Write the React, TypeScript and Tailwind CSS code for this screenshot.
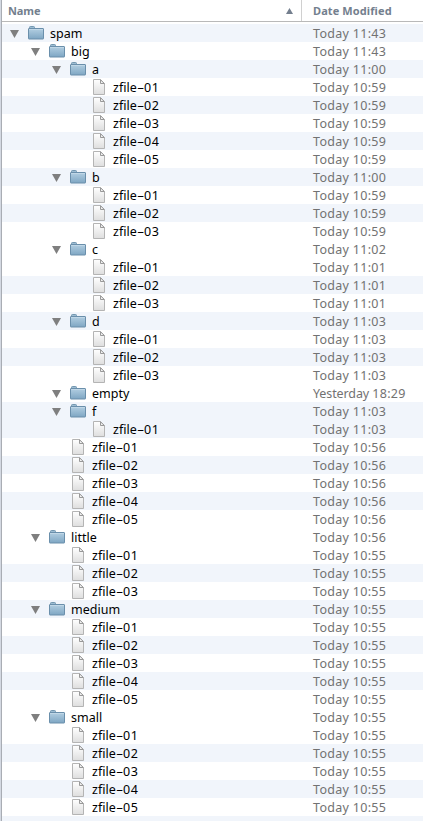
type Row = { depth: number; name: string; date: string; folder?: boolean };

const folder = (depth: number, name: string, date: string): Row => ({ depth, name, date, folder: true });
const files = (depth: number, count: number, date: string): Row[] =>
  Array.from({ length: count }, (_, i) => ({ depth, name: `zfile-0${i + 1}`, date }));

const rows: Row[] = [
  folder(0, 'spam', 'Today 11:43'),
  folder(1, 'big', 'Today 11:43'),
  folder(2, 'a', 'Today 11:00'),
  ...files(3, 5, 'Today 10:59'),
  folder(2, 'b', 'Today 11:00'),
  ...files(3, 3, 'Today 10:59'),
  folder(2, 'c', 'Today 11:02'),
  ...files(3, 3, 'Today 11:01'),
  folder(2, 'd', 'Today 11:03'),
  ...files(3, 3, 'Today 11:03'),
  folder(2, 'empty', 'Yesterday 18:29'),
  folder(2, 'f', 'Today 11:03'),
  ...files(3, 1, 'Today 11:03'),
  ...files(2, 5, 'Today 10:56'),
  folder(1, 'little', 'Today 10:56'),
  ...files(2, 3, 'Today 10:55'),
  folder(1, 'medium', 'Today 10:55'),
  ...files(2, 5, 'Today 10:55'),
  folder(1, 'small', 'Today 10:55'),
  ...files(2, 5, 'Today 10:55'),
];

// Rows whose stripe departs from the even/odd alternation.
const plainRows = [12, 20, 28, 38];
const isStriped = (i: number) => i === 21 || (i % 2 === 0 && !plainRows.includes(i));

function FolderIcon() {
  return (
    <svg width="16" height="14" viewBox="0 0 16 14" className="block shrink-0">
      <path d="M1.5 3V1.5Q1.5.5 2.3.5H5.7Q6.5.5 6.5 1.5V3Z" fill="#9dbdd3" stroke="#7397b0" />
      <rect x=".5" y="2.5" width="15" height="10.5" rx=".4" fill="url(#folderFill)" stroke="#6a8fab" />
      <path d="M1 3.5H15" stroke="#c0d7e7" />
    </svg>
  );
}

function FileIcon() {
  return (
    <svg width="12" height="16" viewBox="0 0 12 16" className="block shrink-0">
      <path d="M.5.5H7.5L11.5 4.5V15.5H.5Z" fill="url(#fileFill)" stroke="#b4b4b4" />
      <path d="M7.5.8V4.5H11.3Z" fill="#f4f4f4" stroke="#8e8e8e" strokeWidth=".9" />
    </svg>
  );
}

function Name({ text }: { text: string }) {
  const [stem, digits] = text.split('-');
  if (!digits) return <span>{text}</span>;
  return (
    <span>
      {stem}
      <span className="inline-block w-[7.4px] origin-left scale-x-[1.8]">-</span>
      <span className="tracking-[0.4px]">{digits}</span>
    </span>
  );
}

function DateText({ text }: { text: string }) {
  const [day, time] = text.split(' ');
  return (
    <span className="text-[#727272]">
      <span className={day === 'Today' ? 'tracking-[0.3px]' : 'tracking-[-0.1px]'}>{day} </span>
      <span className="tracking-[0.3px]">{time}</span>
    </span>
  );
}

const indent = ['pl-[8px]', 'pl-[29px]', 'pl-[50px]', 'pl-[71px]'];

export default function App() {
  return (
    <div className="h-[821px] w-[423px] overflow-hidden border-l border-[#d4d9e2] bg-white font-['Noto_Sans','Open_Sans',sans-serif] text-[12.5px]">
      <svg width="0" height="0" className="absolute">
        <defs>
          <linearGradient id="folderFill" x1="0" y1="0" x2="0" y2="1">
            <stop stopColor="#b3cfe2" />
            <stop offset="1" stopColor="#7ea6c3" />
          </linearGradient>
          <linearGradient id="fileFill" x1="0" y1="0" x2="0" y2="1">
            <stop stopColor="#fff" />
            <stop offset="1" stopColor="#dedede" />
          </linearGradient>
        </defs>
      </svg>
      <div className="h-full border-l border-[#a9adb4]">
        <div className="flex h-[22px] items-center border-b border-[#b9b9b9] text-[11px] leading-[20px] font-bold text-[#747f8e]">
          <div className="flex h-full w-[300px] items-center justify-between border-r border-[#d0d0d0] pr-[8px] pl-[6px]">
            <span className="tracking-[-0.1px]">Name</span>
            <svg width="7" height="6" viewBox="0 0 7 6">
              <path d="M3.5 0L7 6H0Z" fill="#747f8e" />
            </svg>
          </div>
          <span className="pl-[11px] tracking-[0.1px]">Date Modified</span>
        </div>
        <div className="pt-[2px]">
          {rows.map((row, i) => (
            <div
              key={i}
              className={`flex h-[18px] items-center leading-[16px] whitespace-nowrap ${isStriped(i) ? 'bg-[#f1f5fb]' : 'bg-white'}`}
            >
              <div className={`flex w-[311px] items-center ${indent[row.depth]}`}>
                <span className="w-[18px] pt-[2px]">
                  {row.folder && (
                    <svg width="9" height="8" viewBox="0 0 9 8" className="block">
                      <path d="M0 0H9L4.5 8Z" fill="#7f7f7f" />
                    </svg>
                  )}
                </span>
                <span className="flex w-[22px] items-center">
                  {row.folder ? <FolderIcon /> : <span className="pl-[2px]"><FileIcon /></span>}
                </span>
                <span className="pt-[2px] text-black">
                  <Name text={row.name} />
                </span>
              </div>
              <span className="pt-[2px]">
                <DateText text={row.date} />
              </span>
            </div>
          ))}
          <div className="h-[18px] bg-[#f1f5fb]" />
        </div>
      </div>
    </div>
  );
}
